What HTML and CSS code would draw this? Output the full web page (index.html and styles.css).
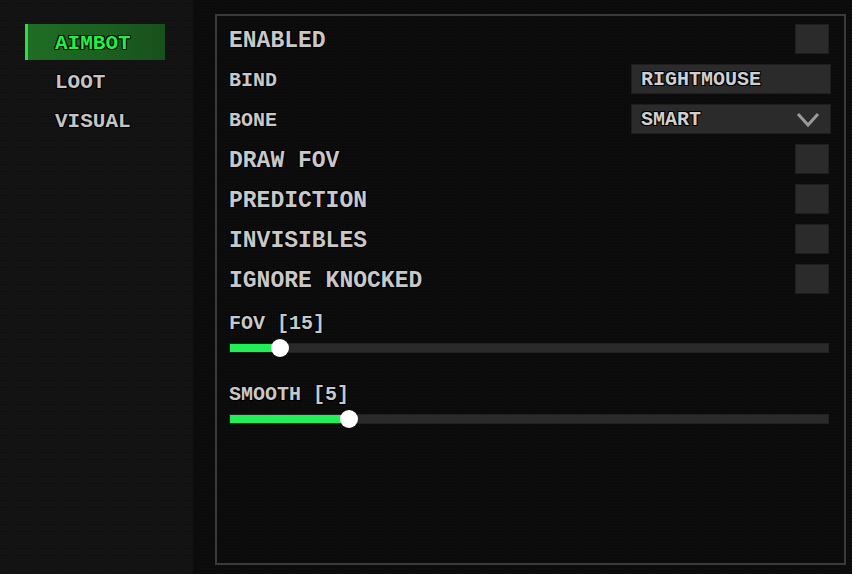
FILE: index.html
```html
<!DOCTYPE html>
<html>
<head>
<meta charset="utf-8">
<link rel="stylesheet" href="styles.css">
</head>
<body>
<div class="app">
  <nav class="sidebar">
    <div class="nav-item active">AIMBOT</div>
    <div class="nav-item">LOOT</div>
    <div class="nav-item">VISUAL</div>
  </nav>
  <main class="main">
    <section class="panel">
      <div class="rows">
        <div class="row"><span class="label big">ENABLED</span><span class="check"></span></div>
        <div class="row"><span class="label">BIND</span><span class="field">RIGHTMOUSE</span></div>
        <div class="row"><span class="label">BONE</span><span class="field select">SMART<svg class="chev" width="24" height="16" viewBox="0 0 24 16"><path d="M2 2 L12 13 L22 2" fill="none" stroke="#9a9a9a" stroke-width="3"/></svg></span></div>
        <div class="row"><span class="label big">DRAW FOV</span><span class="check"></span></div>
        <div class="row"><span class="label big">PREDICTION</span><span class="check"></span></div>
        <div class="row"><span class="label big">INVISIBLES</span><span class="check"></span></div>
        <div class="row"><span class="label big">IGNORE KNOCKED</span><span class="check"></span></div>
      </div>
      <div class="sliders">
        <div class="slider">
          <div class="label">FOV [15]</div>
          <div class="track"><div class="fill" style="width:50px"></div><div class="knob" style="left:50px"></div></div>
        </div>
        <div class="slider">
          <div class="label">SMOOTH [5]</div>
          <div class="track"><div class="fill" style="width:119px"></div><div class="knob" style="left:119px"></div></div>
        </div>
      </div>
    </section>
  </main>
</div>
</body>
</html>
```
FILE: styles.css
```css
* { box-sizing: border-box; }
html, body {
  margin: 0;
  padding: 0;
  width: 852px;
  height: 574px;
  overflow: hidden;
  background: #0b0b0b;
  font-family: "Liberation Mono", "DejaVu Sans Mono", monospace;
  font-weight: bold;
}
.app {
  display: flex;
  width: 852px;
  height: 574px;
}
.sidebar {
  width: 193px;
  flex: none;
  background-color: #121212;
  background-image: radial-gradient(#171717 0.6px, transparent 0.8px);
  background-size: 3px 3px;
  padding: 24px 0 0 25px;
  display: flex;
  flex-direction: column;
  gap: 3px;
}
.nav-item {
  width: 140px;
  height: 36px;
  display: flex;
  align-items: center;
  padding-left: 30px;
  padding-top: 2px;
  font-size: 21px;
  color: #c4c4c4;
  text-shadow: 1px 1px 0 #000, -1px -1px 0 #000, 1px -1px 0 #000, -1px 1px 0 #000;
}
.nav-item.active {
  background: linear-gradient(90deg, #1f6d24 0%, #1b5f20 60%, #17501b 100%);
  border-left: 3px solid #28e040;
  padding-left: 27px;
  color: #22f040;
}
.main {
  flex: 1;
  padding: 14px 6px 9px 22px;
  background-color: #0b0b0b;
  background-image: radial-gradient(#111 0.6px, transparent 0.8px);
  background-size: 3px 3px;
}
.panel {
  height: 100%;
  border: 2px solid #3a3a3a;
  padding: 8px 15px 0 12px;
}
.rows {
  display: flex;
  flex-direction: column;
  gap: 10px;
}
.row {
  height: 30px;
  display: flex;
  align-items: center;
  justify-content: space-between;
}
.label {
  font-size: 20px;
  color: #c8c8c8;
  line-height: 24px;
  padding-top: 3px;
  text-shadow: 1px 1px 0 #000, -1px -1px 0 #000, 1px -1px 0 #000, -1px 1px 0 #000;
}
.label.big {
  font-size: 23px;
}
.check {
  width: 34px;
  height: 30px;
  background: #2b2b2b;
  border: 1px solid #1e1e1e;
}
.field {
  width: 200px;
  height: 30px;
  margin-right: -2px;
  background: #2b2b2b;
  border: 1px solid #1e1e1e;
  display: flex;
  align-items: center;
  justify-content: space-between;
  padding: 1px 10px 0 9px;
  font-size: 20px;
  color: #cfcfcf;
  text-shadow: 1px 1px 0 #000, -1px -1px 0 #000, 1px -1px 0 #000, -1px 1px 0 #000;
}
.chev { display: block; }
.sliders {
  margin-top: 17px;
  display: flex;
  flex-direction: column;
  gap: 29px;
}
.slider .label { line-height: 24px; padding-top: 1px; }
.track {
  position: relative;
  margin-top: 7px;
  height: 10px;
  background: #2a2a2a;
  border: 1px solid #222;
}
.fill {
  height: 100%;
  background: #22ee55;
}
.knob {
  position: absolute;
  top: 50%;
  width: 18px;
  height: 18px;
  margin: -9px 0 0 -9px;
  border-radius: 50%;
  background: #fff;
}
```
